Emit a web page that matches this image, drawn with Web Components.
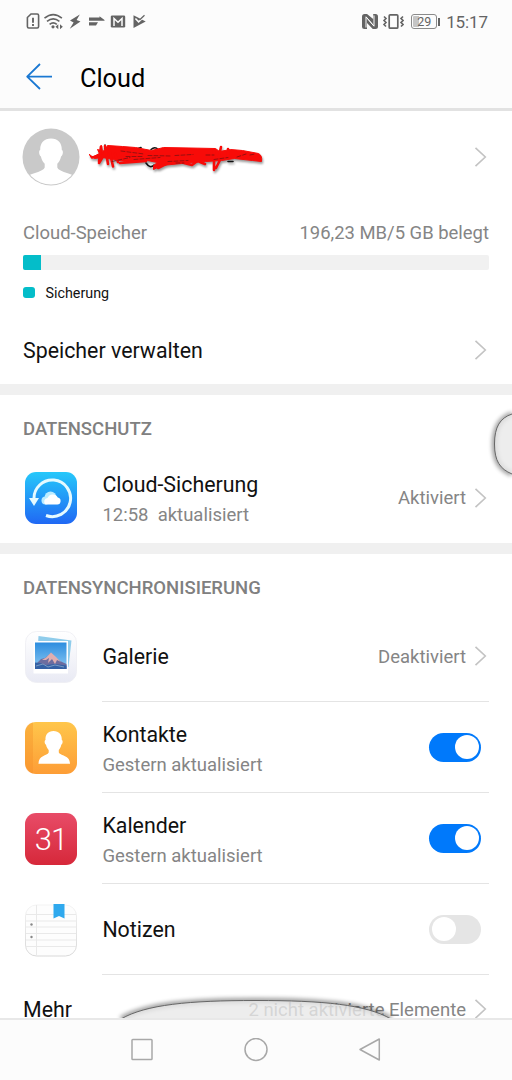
<!DOCTYPE html>
<html lang="de">
<head>
<meta charset="utf-8">
<meta name="viewport" content="width=device-width, initial-scale=1">
<title>Cloud</title>
<style>
  body { margin: 0; background: #fff; color: #111; font-family: Roboto, "Noto Sans", sans-serif; }
</style>
</head>
<body>
<phone-screen>
  <status-bar slot="top" time="15:17" battery="29"></status-bar>
  <title-bar slot="top">Cloud</title-bar>

  <account-row></account-row>
  <storage-meter label="Cloud-Speicher" usage="196,23 MB/5 GB belegt" percent="3.9">Sicherung</storage-meter>
  <settings-row compact chevron>Speicher verwalten</settings-row>

  <settings-section heading="DATENSCHUTZ">
    <settings-row chevron value="Aktiviert" sub="12:58&nbsp; aktualisiert">
      <app-icon slot="icon" name="backup"></app-icon>Cloud-Sicherung
    </settings-row>
  </settings-section>

  <settings-section heading="DATENSYNCHRONISIERUNG">
    <settings-row line chevron value="Deaktiviert"><app-icon slot="icon" name="gallery"></app-icon>Galerie</settings-row>
    <settings-row line sub="Gestern aktualisiert">
      <app-icon slot="icon" name="contacts"></app-icon>Kontakte
      <toggle-switch slot="action" on></toggle-switch>
    </settings-row>
    <settings-row line sub="Gestern aktualisiert">
      <app-icon slot="icon" name="calendar"></app-icon>Kalender
      <toggle-switch slot="action" on></toggle-switch>
    </settings-row>
    <settings-row line>
      <app-icon slot="icon" name="notes"></app-icon>Notizen
      <toggle-switch slot="action"></toggle-switch>
    </settings-row>
    <settings-row compact chevron value="2 nicht aktivierte Elemente">Mehr</settings-row>
  </settings-section>

  <edge-bubble slot="overlay" side="right"></edge-bubble>
  <edge-bubble slot="overlay" side="bottom"></edge-bubble>
  <nav-bar slot="bottom"></nav-bar>
</phone-screen>

<script>
const chevron = `
  <svg class="chevron" width="15" height="22" viewBox="0 0 15 22" fill="none" stroke="#c3c3c3" stroke-width="1.6">
    <path d="M1.500 1.800 11.300 11 1.500 20.200"/>
  </svg>`;

class PhoneScreen extends HTMLElement {
  constructor() {
    super();
    this.attachShadow({ mode: 'open' }).innerHTML = `
      <style>
        :host { position: relative; display: flex; flex-direction: column; width: 512px; height: 1080px; overflow: hidden; background: #fff; }
        header { flex: none; box-sizing: border-box; height: 111px; background: #fcfcfc; border-bottom: 3px solid #e2e2e2; }
        main { position: relative; flex: 1; min-height: 0; overflow: hidden; }
      </style>
      <header><slot name="top"></slot></header>
      <main><slot></slot><slot name="overlay"></slot></main>
      <slot name="bottom"></slot>`;
  }
}

class StatusBar extends HTMLElement {
  constructor() {
    super();
    this.attachShadow({ mode: 'open' });
  }

  connectedCallback() {
    this.shadowRoot.innerHTML = `
      <style>
        :host { display: flex; justify-content: space-between; align-items: center; box-sizing: border-box; height: 43px; padding: 0 24px 0 26px; color: #646464; }
        svg { display: block; }
        .group { display: flex; align-items: center; }
        .battery { display: flex; align-items: center; margin: 0 6px 0 7px; }
        .cell { box-sizing: border-box; width: 26px; height: 15px; border: 1.3px solid #8a8a8a; border-radius: 3px; text-align: center;
          font-size: 12.5px; line-height: 13px; background: linear-gradient(90deg, #c5c5c5 29%, transparent 29%); background-clip: content-box; padding: 1px; }
        .cell span { display: block; margin-top: -1px; }
        .tip { width: 2px; height: 8px; margin-left: 1px; background: #646464; }
        .time { font-size: 17px; line-height: 22px; letter-spacing: -.1px; }
      </style>
      <svg width="124" height="20" viewBox="26 12 124 20" fill="none" stroke="#646464" stroke-width="1.6">
        <path d="M31 14h6.200q1.400 0 1.400 1.400v11.200q0 1.400-1.400 1.400h-8.400q-1.400 0-1.400-1.400V17.500z"/>
        <path d="M33 17.800v5M33 24v2" stroke-width="1.900"/>
        <path d="M44.500 18.200q8.700-7.200 17.400 0M47 21.300q6.200-5 12.400 0M49.600 24.300q3.600-2.900 7.200 0"/>
        <g fill="#646464" stroke="none">
          <circle cx="53" cy="26.800" r="1.600"/>
          <path d="M55.500 26.800l2.800-2.500v5zM62.800 26.800 60 24.300v5z"/>
          <path d="M79.800 14.500 70 20.500l3.600 2-3.800 6.300 10.700-7.300-3.900-1.600z"/>
          <path d="M89 17.600h10.500v-1.400l5 3.800v.700H89zM89 22.300h9l-2 3.200h-7z"/>
          <rect x="110.800" y="15.500" width="14.400" height="12" rx="1.300"/>
          <path d="M133.500 15.200 145.700 21.500 133.500 28z"/>
        </g>
        <path d="M114 26v-7.500l4 3.700 4-3.700V26" stroke="#fcfcfc" stroke-width="1.500"/>
        <path d="m135.400 18.500 3.200 3.400 6.200-6" stroke="#fcfcfc" stroke-width="1.600"/>
        <path d="m139.500 20 5-4.700" stroke-width="1.200"/>
      </svg>
      <div class="group">
        <svg width="43" height="18" viewBox="362 13 43 18" fill="none" stroke="#646464">
          <rect x="363" y="14" width="16" height="15" rx="2.500" fill="#646464" stroke="none"/>
          <path d="M367 27.500V16.800l7.700 9M375 15.500v10.700l-7.700-9" stroke="#fcfcfc" stroke-width="1"/>
          <path d="M368 14h6.200v5zM368 29.200h6L368 23z" fill="#fcfcfc" stroke="none"/>
          <rect x="390.200" y="14.800" width="8.600" height="13.400" rx="1" stroke-width="1.700"/>
          <path d="m385 16.500 2 2-2 2 2 2-2 2 2 2M404 16.500l-2 2 2 2-2 2 2 2-2 2" stroke-width="1.600"/>
        </svg>
        <div class="battery"><div class="cell"><span>${this.getAttribute('battery')}</span></div><div class="tip"></div></div>
        <div class="time">${this.getAttribute('time')}</div>
      </div>`;
  }
}

class TitleBar extends HTMLElement {
  constructor() {
    super();
    this.attachShadow({ mode: 'open' }).innerHTML = `
      <style>
        :host { display: flex; align-items: center; gap: 26px; height: 66px; padding-left: 25px; font-size: 25.3px; line-height: 32px; color: #000; }
        .text { padding-top: 5px; }
      </style>
      <svg width="29" height="28" viewBox="0 0 29 28" fill="none" stroke="#1a78d2" stroke-width="1.8" stroke-linejoin="round">
        <path d="M15 2 2.200 14.600 15 27M2.200 14.600H27"/>
      </svg>
      <div class="text"><slot></slot></div>`;
  }
}

class AccountRow extends HTMLElement {
  constructor() {
    super();
    this.attachShadow({ mode: 'open' }).innerHTML = `
      <style>
        :host { display: flex; align-items: center; box-sizing: border-box; height: 91px; padding: 0 23px 0 22px; }
        .scribble { margin-left: 8px; filter: drop-shadow(1px 2px 1px #0006); }
        .chevron { margin-left: auto; }
      </style>
      <svg width="58" height="58" viewBox="0 0 58 58">
        <clipPath id="round"><circle cx="29" cy="29" r="27.5"/></clipPath>
        <circle cx="29" cy="29" r="28.5" fill="#c9c9c9"/>
        <path clip-path="url(#round)" fill="#fff" d="M29 10.500c-7 0-11 4.500-10.800 11.500-1.800.400-1.200 5.500.700 6.400.800 4 2.300 5.700 3.800 7.400v3.600C21 43.500 12 44.500 7.500 47V58h43V47C46 44.500 37 43.500 35.300 39.400v-3.600c1.500-1.700 3-3.400 3.800-7.400 1.900-.900 2.500-6 .700-6.400C40 15 36 10.500 29 10.500z"/>
      </svg>
      <svg class="scribble" width="178" height="34" viewBox="88 142 178 34" fill="none" stroke="#f80b08" stroke-linecap="round" stroke-linejoin="round">
        <path d="M105 147v4M138 150.500l3-1M151 151.500q4-3.500 7 0M146 165q4 6 8 2M228 163.500h5" stroke="#111" stroke-width="1.600"/>
        <path fill="#f80b08" stroke-width="1" d="M91.500 159.500l8-4-2-4 3 1 1-5 1 6 3-2 2-4 15 1 13 1 16 3 12-3 52 1 4 3 11-2 12 1 16 3q4 2 3 8l-9-1-18-2-13 2-16 1-11 1-13 1-20 2-8 4 0-4 4-3-10-2-22 1-12-2-11-2-8 1-5-4z"/>
        <path d="M92 159.500l9-2M101 148.500l-2 15M105 148l3 18M99 165l8-13M110 155l3 13.500M115 156l3 8M214 152v7M221 149l-2 9M228 151v7M214 160v12M216 170l4-8M158 170l12-6M184 165l8 2 4-3M200 164l5 2M120 165l26-2" stroke-width="2.600"/>
        <path d="M126 158.500h18M148 157.500l23 .500M175 157.500l18-1M112 163.500l18-4M134 161.500l26-2M168 163.500l20-1M206 157h8M237 159l9-3M214 161.500l14-2M121 153l23 3M250 157l5-1M176 165l8 0" stroke="#7f1010" stroke-width=".800" stroke-dasharray="4 2"/>
      </svg>
      ${chevron}`;
  }
}

class StorageMeter extends HTMLElement {
  constructor() {
    super();
    this.attachShadow({ mode: 'open' });
  }

  connectedCallback() {
    this.shadowRoot.innerHTML = `
      <style>
        :host { display: block; box-sizing: border-box; height: 114px; padding: 20px 23px 0; }
        .labels { display: flex; justify-content: space-between; font-size: 18.45px; line-height: 22px; color: #858585; }
        .bar { height: 15px; margin-top: 11px; border-radius: 2px; overflow: hidden; background: #f1f1f1; }
        .fill { width: ${this.getAttribute('percent')}%; height: 100%; background: #04bdc9; }
        .legend { display: flex; align-items: center; gap: 11px; margin-top: 13px; font-size: 14.3px; line-height: 20px; }
        .dot { width: 11.5px; height: 11.5px; margin-top: -1px; border-radius: 3px; background: #04bdc9; }
      </style>
      <div class="labels"><span>${this.getAttribute('label')}</span><span>${this.getAttribute('usage')}</span></div>
      <div class="bar"><div class="fill"></div></div>
      <div class="legend"><div class="dot"></div><slot></slot></div>`;
  }
}

class SettingsSection extends HTMLElement {
  constructor() {
    super();
    this.attachShadow({ mode: 'open' });
  }

  connectedCallback() {
    this.shadowRoot.innerHTML = `
      <style>
        :host { display: block; border-top: 11px solid #f0f0f0; }
        .heading { padding: 24px 23px 13px; font-size: 18.5px; font-weight: 500; line-height: 20px; color: #808080; }
      </style>
      <div class="heading">${this.getAttribute('heading')}</div>
      <slot></slot>`;
  }
}

class SettingsRow extends HTMLElement {
  constructor() {
    super();
    this.attachShadow({ mode: 'open' });
  }

  connectedCallback() {
    const sub = this.getAttribute('sub');
    const value = this.getAttribute('value');

    this.shadowRoot.innerHTML = `
      <style>
        :host { display: flex; height: 91px; padding: 0 23px; }
        :host([compact]) { height: 68px; }
        .icon { display: flex; align-items: center; flex: none; width: 79.4px; }
        :host([compact]) .icon { display: none; }
        .body { display: flex; align-items: center; flex: 1; min-width: 0; box-sizing: border-box; }
        :host([line]) .body { border-bottom: 1px solid #e4e4e4; }
        .texts { flex: 1; white-space: nowrap; padding-top: 1px; }
        :host([sub]) .texts { padding-top: 4px; }
        :host([line][sub]) .texts { padding-top: 6px; }
        .title { font-size: 21.35px; line-height: 30px; }
        .sub, .value { font-size: 18.5px; line-height: 30px; color: #858585; }
        .value { white-space: nowrap; padding-right: 8px; padding-top: 1px; }
        ::slotted(toggle-switch) { margin-right: 8px; }
      </style>
      <div class="icon"><slot name="icon"></slot></div>
      <div class="body">
        <div class="texts">
          <div class="title"><slot></slot></div>` +
          (sub ? `<div class="sub">${sub}</div>` : ``) + `
        </div>` +
        (value ? `<div class="value">${value}</div>` : ``) +
        (this.hasAttribute('chevron') ? chevron : ``) + `
        <slot name="action"></slot>
      </div>`;
  }
}

class ToggleSwitch extends HTMLElement {
  constructor() {
    super();
    this.attachShadow({ mode: 'open' }).innerHTML = `
      <style>
        :host { display: flex; align-items: center; flex: none; box-sizing: border-box; width: 52px; height: 29px; padding: 0 2.5px; border-radius: 15px; background: #e5e5e5; }
        :host([on]) { justify-content: flex-end; background: #0079fb; }
        .knob { width: 24px; height: 24px; border-radius: 50%; background: #fff; }
      </style>
      <div class="knob"></div>`;
  }
}

const appIcons = {
  backup: `
    <linearGradient id="g" x2="0" y2="1"><stop stop-color="#26c8fa"/><stop offset="1" stop-color="#2068f4"/></linearGradient>
    <rect width="52" height="52" rx="11" fill="url(#g)"/>
    <path d="M9 27A18.300 18.300 0 1 1 21 43.500" fill="none" stroke="#e5faff" stroke-width="3"/>
    <path d="M4 26h10l-5 8z" fill="#e5faff"/>
    <circle cx="25.500" cy="25.500" r="6" fill="#bcecff"/><circle cx="20.500" cy="28.500" r="4" fill="#bcecff"/>
    <path d="M20.500 32.500a3.600 3.600 0 0 1 2-6.400 5.700 5.700 0 0 1 10.300-.700 3.600 3.600 0 0 1-.500 7.100z" fill="#fff"/>`,
  gallery: `
    <linearGradient id="g" x2="0" y2="1"><stop stop-color="#fff"/><stop offset="1" stop-color="#e9eaf4"/></linearGradient>
    <linearGradient id="sky" x2="0" y2="1"><stop stop-color="#2c8ddf"/><stop offset="1" stop-color="#8cc9f3"/></linearGradient>
    <rect x=".5" y=".5" width="51" height="51" rx="11" fill="url(#g)" stroke="#ededf2" stroke-width=".8"/>
    <path d="M13.500 5 46.500 9.500 43.500 36 12 32z" fill="#8fcceb"/>
    <rect x="8.500" y="10" width="34.500" height="32.500" fill="#fff"/>
    <rect x="10" y="11.500" width="31.500" height="26.500" fill="url(#sky)"/>
    <path d="M10 34l6-6 4-1 6-5 5 5 4 3 6.500 3v5H10z" fill="#6c6d9f"/>
    <path d="m26 21.500-5 5-4 2.500 4 0 3-2-1 5 4-4 3 5 2-4 4 2-5-5z" fill="#dfaeb0"/>
    <path d="M10 31.500l5 .5 6 2 9-1 11.500 1.500V38H10z" fill="#3461a5"/>
    <path d="m11 35 7-2 5 3 7-2 9 2" fill="none" stroke="#8daacb" stroke-width=".8"/>`,
  contacts: `
    <linearGradient id="g" x2="0" y2="1"><stop stop-color="#ffc64b"/><stop offset="1" stop-color="#fd9d36"/></linearGradient>
    <rect width="52" height="52" rx="11" fill="url(#g)"/>
    <path d="M8 .4v51.200Q0 50 0 41V11Q0 2 8 .4z" fill="#f48b24" opacity=".35"/>
    <path fill="#fff" d="M28.500 9c-5.500 0-8.300 3.500-8 9-1.300.3-1 4 .5 4.700.5 2.500 1.600 4 2.700 5.200V30.500C22 34 13.500 33 13.500 41.800h31.500C45 33 35.500 34 33.800 30.500v-2.600c1.100-1.200 2-2.700 2.500-5.200 1.500-.7 1.800-4.400.5-4.700C37 12.500 34 9 28.500 9z"/>`,
  calendar: `
    <linearGradient id="g" x2="0" y2="1"><stop stop-color="#e84c68"/><stop offset="1" stop-color="#d6283a"/></linearGradient>
    <rect width="52" height="52" rx="11" fill="url(#g)"/>
    <text x="26" y="37" text-anchor="middle" font-size="31" font-weight="300" letter-spacing="-1" fill="#fff">31</text>`,
  notes: `
    <linearGradient id="g" x2="0" y2="1"><stop stop-color="#f3f3f3"/><stop offset="1" stop-color="#d8d8d8"/></linearGradient>
    <rect x=".5" y="1" width="51" height="51" rx="11" fill="#fdfdfd" stroke="url(#g)"/>
    <path d="M1 10.500h50M1 17h50M1 23h50M1 29.500h50M1 36h50M1 42.500h50M11.500 1v51" fill="none" stroke="#e9e9e9"/>
    <circle cx="6.500" cy="20.500" r="1.200" fill="#888"/><circle cx="6.500" cy="33" r="1.200" fill="#888"/>
    <path d="M28.500 0h11v14.500L34 12l-5.500 2.500z" fill="#2fa9ee"/>`
};

class AppIcon extends HTMLElement {
  constructor() {
    super();
    this.attachShadow({ mode: 'open' });
  }

  connectedCallback() {
    this.shadowRoot.innerHTML = `
      <style>
        :host { display: block; margin-left: 2px; }
        svg { display: block; overflow: visible; }
      </style>
      <svg width="52" height="52" viewBox="0 0 52 52">${appIcons[this.getAttribute('name')]}</svg>`;
  }
}

/**
 * Grey blob that swells out of a screen edge while a gesture is running. It lies over the list.
 */
class EdgeBubble extends HTMLElement {
  constructor() {
    super();
    this.attachShadow({ mode: 'open' });
  }

  connectedCallback() {
    const right = this.getAttribute('side') === 'right';
    const outline = right
      ? 'M44 16C32 20 26.500 29 26.500 46S32 71 44 76'
      : 'M20 43C45 28.500 88 24.500 155 24.500S265 28.500 290 43';
    this.shadowRoot.innerHTML = `
      <style>
        :host { position: absolute; pointer-events: none; ${right ? 'right: 0; top: 287px;' : 'left: 101px; bottom: 0;'} }
        svg { display: block; }
      </style>
      <svg width="${right ? 44 : 310}" height="${right ? 94 : 42}">
        <path d="${outline}" fill="none" stroke="#000" stroke-width="5" opacity=".4" style="filter: blur(2.2px)"/>
        <path d="${outline}" fill="#e9e9e9" fill-opacity=".8" stroke="#666" stroke-width="1"/>
      </svg>`;
  }
}

class NavBar extends HTMLElement {
  constructor() {
    super();
    this.attachShadow({ mode: 'open' }).innerHTML = `
      <style>
        :host { display: flex; justify-content: center; align-items: center; gap: 90px; flex: none; box-sizing: border-box; height: 62px; border-top: 2px solid #e8e8e8; background: #fcfcfc; }
        svg { fill: none; stroke: #a8a8a8; stroke-width: 1.5; stroke-linejoin: round; }
      </style>
      <svg width="24" height="24"><rect x="2" y="1.500" width="20" height="20" rx=".8"/></svg>
      <svg width="24" height="24"><circle cx="12" cy="11.500" r="11"/></svg>
      <svg width="24" height="24"><path d="M21.300 1v21L2 11.500z"/></svg>`;
  }
}

customElements.define('phone-screen', PhoneScreen);
customElements.define('status-bar', StatusBar);
customElements.define('title-bar', TitleBar);
customElements.define('account-row', AccountRow);
customElements.define('storage-meter', StorageMeter);
customElements.define('settings-section', SettingsSection);
customElements.define('settings-row', SettingsRow);
customElements.define('toggle-switch', ToggleSwitch);
customElements.define('app-icon', AppIcon);
customElements.define('edge-bubble', EdgeBubble);
customElements.define('nav-bar', NavBar);
</script>
</body>
</html>
